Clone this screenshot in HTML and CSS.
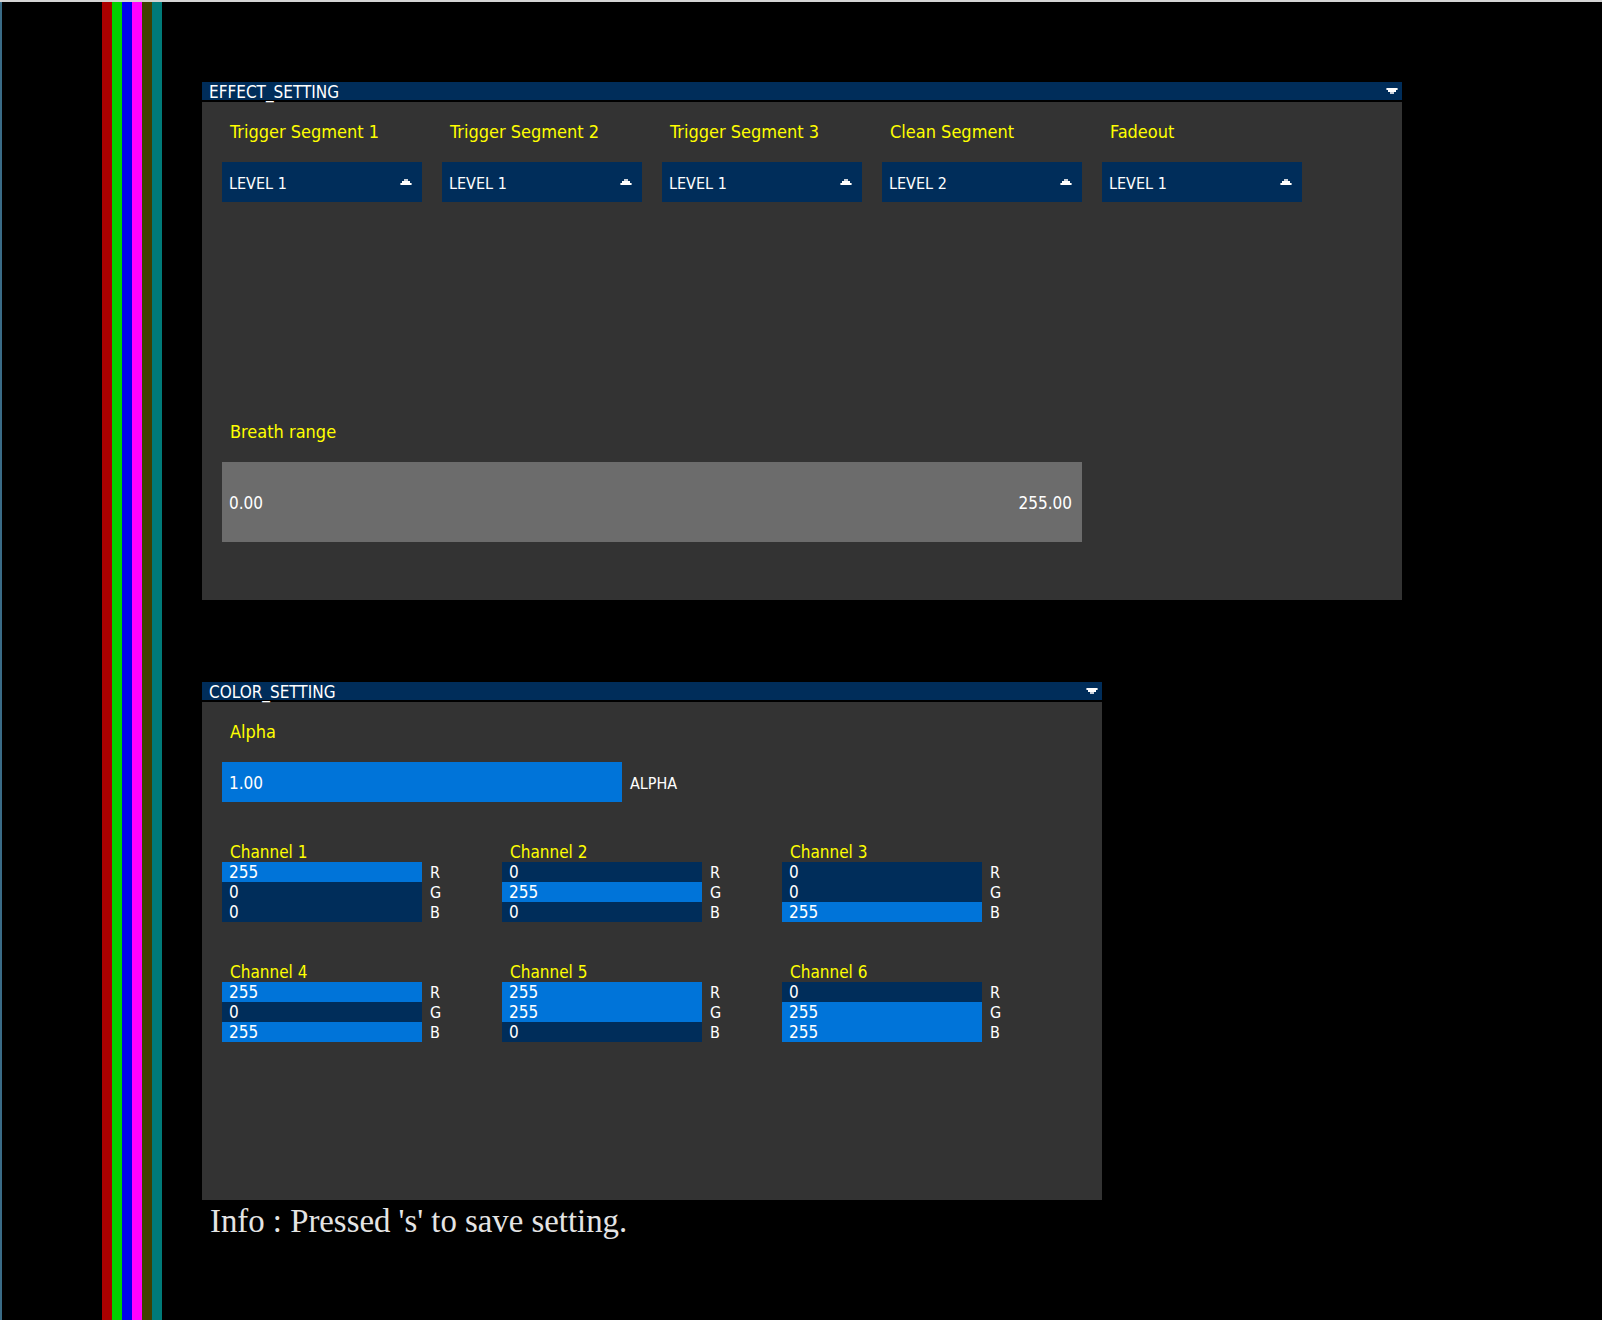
FILE: index.html
```html
<!DOCTYPE html>
<html>
<head>
<meta charset="utf-8">
<title>Settings</title>
<link rel="stylesheet" href="styles.css">
</head>
<body>
<div class="screen">
  <div class="edge"></div>
  <div class="gutter"></div>
  <div class="stripes">
    <div class="stripe s-red"></div>
    <div class="stripe s-green"></div>
    <div class="stripe s-blue"></div>
    <div class="stripe s-magenta"></div>
    <div class="stripe s-olive"></div>
    <div class="stripe s-teal"></div>
  </div>
  <div class="spacer"></div>
  <main class="content">
    <section class="group group-effect">
      <header class="group-head">
        <span>EFFECT_SETTING</span>
        <svg class="caret" width="12" height="6" viewBox="0 0 12 6" shape-rendering="crispEdges">
          <rect x="0" y="0" width="12" height="2" fill="#fff"/>
          <rect x="0" y="0" width="1" height="2" fill="#9aa7b8"/>
          <rect x="11" y="0" width="1" height="2" fill="#9aa7b8"/>
          <rect x="2" y="2" width="8" height="2" fill="#fff"/>
          <rect x="4" y="4" width="4" height="2" fill="#c9d0da"/>
        </svg>
      </header>
      <div class="group-body">
        <div class="seg-row">
          <div class="seg">
            <div class="label label-top">Trigger Segment 1</div>
            <div class="dropdown"><span>LEVEL 1</span>
              <svg class="caret" width="12" height="6" viewBox="0 0 12 6" shape-rendering="crispEdges"><rect x="4" y="0" width="4" height="2" fill="#c9d0da"/><rect x="2" y="2" width="8" height="2" fill="#fff"/><rect x="0" y="4" width="12" height="2" fill="#fff"/><rect x="0" y="4" width="1" height="2" fill="#9aa7b8"/><rect x="11" y="4" width="1" height="2" fill="#9aa7b8"/></svg>
            </div>
          </div>
          <div class="seg">
            <div class="label label-top">Trigger Segment 2</div>
            <div class="dropdown"><span>LEVEL 1</span>
              <svg class="caret" width="12" height="6" viewBox="0 0 12 6" shape-rendering="crispEdges"><rect x="4" y="0" width="4" height="2" fill="#c9d0da"/><rect x="2" y="2" width="8" height="2" fill="#fff"/><rect x="0" y="4" width="12" height="2" fill="#fff"/><rect x="0" y="4" width="1" height="2" fill="#9aa7b8"/><rect x="11" y="4" width="1" height="2" fill="#9aa7b8"/></svg>
            </div>
          </div>
          <div class="seg">
            <div class="label label-top">Trigger Segment 3</div>
            <div class="dropdown"><span>LEVEL 1</span>
              <svg class="caret" width="12" height="6" viewBox="0 0 12 6" shape-rendering="crispEdges"><rect x="4" y="0" width="4" height="2" fill="#c9d0da"/><rect x="2" y="2" width="8" height="2" fill="#fff"/><rect x="0" y="4" width="12" height="2" fill="#fff"/><rect x="0" y="4" width="1" height="2" fill="#9aa7b8"/><rect x="11" y="4" width="1" height="2" fill="#9aa7b8"/></svg>
            </div>
          </div>
          <div class="seg">
            <div class="label label-top">Clean Segment</div>
            <div class="dropdown"><span>LEVEL 2</span>
              <svg class="caret" width="12" height="6" viewBox="0 0 12 6" shape-rendering="crispEdges"><rect x="4" y="0" width="4" height="2" fill="#c9d0da"/><rect x="2" y="2" width="8" height="2" fill="#fff"/><rect x="0" y="4" width="12" height="2" fill="#fff"/><rect x="0" y="4" width="1" height="2" fill="#9aa7b8"/><rect x="11" y="4" width="1" height="2" fill="#9aa7b8"/></svg>
            </div>
          </div>
          <div class="seg">
            <div class="label label-top">Fadeout</div>
            <div class="dropdown"><span>LEVEL 1</span>
              <svg class="caret" width="12" height="6" viewBox="0 0 12 6" shape-rendering="crispEdges"><rect x="4" y="0" width="4" height="2" fill="#c9d0da"/><rect x="2" y="2" width="8" height="2" fill="#fff"/><rect x="0" y="4" width="12" height="2" fill="#fff"/><rect x="0" y="4" width="1" height="2" fill="#9aa7b8"/><rect x="11" y="4" width="1" height="2" fill="#9aa7b8"/></svg>
            </div>
          </div>
        </div>
        <div class="label breath-label">Breath range</div>
        <div class="range"><span>0.00</span><span>255.00</span></div>
      </div>
    </section>

    <section class="group group-color">
      <header class="group-head">
        <span>COLOR_SETTING</span>
        <svg class="caret" width="12" height="6" viewBox="0 0 12 6" shape-rendering="crispEdges">
          <rect x="0" y="0" width="12" height="2" fill="#fff"/>
          <rect x="0" y="0" width="1" height="2" fill="#9aa7b8"/>
          <rect x="11" y="0" width="1" height="2" fill="#9aa7b8"/>
          <rect x="2" y="2" width="8" height="2" fill="#fff"/>
          <rect x="4" y="4" width="4" height="2" fill="#c9d0da"/>
        </svg>
      </header>
      <div class="group-body">
        <div class="label label-top">Alpha</div>
        <div class="alpha-row">
          <div class="alpha-bar">1.00</div>
          <span class="side">ALPHA</span>
        </div>
        <div class="channels">
          <div class="channel">
            <div class="label ch-label">Channel 1</div>
            <div class="row"><div class="cell on">255</div><span class="side">R</span></div>
            <div class="row"><div class="cell">0</div><span class="side">G</span></div>
            <div class="row"><div class="cell">0</div><span class="side">B</span></div>
          </div>
          <div class="channel">
            <div class="label ch-label">Channel 2</div>
            <div class="row"><div class="cell">0</div><span class="side">R</span></div>
            <div class="row"><div class="cell on">255</div><span class="side">G</span></div>
            <div class="row"><div class="cell">0</div><span class="side">B</span></div>
          </div>
          <div class="channel">
            <div class="label ch-label">Channel 3</div>
            <div class="row"><div class="cell">0</div><span class="side">R</span></div>
            <div class="row"><div class="cell">0</div><span class="side">G</span></div>
            <div class="row"><div class="cell on">255</div><span class="side">B</span></div>
          </div>
          <div class="channel">
            <div class="label ch-label">Channel 4</div>
            <div class="row"><div class="cell on">255</div><span class="side">R</span></div>
            <div class="row"><div class="cell">0</div><span class="side">G</span></div>
            <div class="row"><div class="cell on">255</div><span class="side">B</span></div>
          </div>
          <div class="channel">
            <div class="label ch-label">Channel 5</div>
            <div class="row"><div class="cell on">255</div><span class="side">R</span></div>
            <div class="row"><div class="cell on">255</div><span class="side">G</span></div>
            <div class="row"><div class="cell">0</div><span class="side">B</span></div>
          </div>
          <div class="channel">
            <div class="label ch-label">Channel 6</div>
            <div class="row"><div class="cell">0</div><span class="side">R</span></div>
            <div class="row"><div class="cell on">255</div><span class="side">G</span></div>
            <div class="row"><div class="cell on">255</div><span class="side">B</span></div>
          </div>
        </div>
      </div>
    </section>

    <p class="info">Info : Pressed 's' to save setting.</p>
  </main>
</div>
</body>
</html>
```

FILE: styles.css
```css
html, body {
  margin: 0;
  padding: 0;
  background: #000;
}

body {
  width: 1602px;
  height: 1320px;
  overflow: hidden;
  font-family: "DejaVu Sans Condensed", "DejaVu Sans", sans-serif;
  font-stretch: condensed;
  color: #fff;
}

.screen {
  display: flex;
  height: 1320px;
  box-sizing: border-box;
  border-top: 2px solid #d4d4d4;
}

.edge {
  width: 2px;
  background: #3a6b86;
}

.gutter {
  width: 100px;
}

.stripes {
  display: flex;
}

.stripe {
  width: 10px;
}

.s-red { background: #aa0000; }
.s-green { background: #00d200; }
.s-blue { background: #0000ee; }
.s-magenta { background: #ff00ff; }
.s-olive { background: #403f00; }
.s-teal { background: #007a78; }

.spacer {
  width: 40px;
}

.content {
  padding-top: 80px;
}

.group-effect { width: 1200px; }
.group-color { width: 900px; margin-top: 82px; }

.group-head {
  height: 18px;
  background: #002d5a;
  display: flex;
  align-items: center;
  justify-content: space-between;
  padding: 0 4px 0 7px;
  font-size: 17px;
  line-height: 18px;
  color: #fff;
}

.group-head span {
  padding-top: 1px;
}

.caret {
  display: block;
}

.group-body {
  margin-top: 2px;
  height: 498px;
  background: #333333;
  padding: 0 20px;
  box-sizing: border-box;
}

.label {
  color: #ffff00;
  font-size: 18px;
  line-height: 20px;
  padding-left: 8px;
  white-space: nowrap;
}

.label-top {
  height: 60px;
  padding-top: 20px;
  box-sizing: border-box;
}

.seg-row {
  display: flex;
  gap: 20px;
}

.seg {
  width: 200px;
}

.dropdown {
  height: 40px;
  background: #002d5a;
  display: flex;
  align-items: center;
  justify-content: space-between;
  padding: 0 10px 0 7px;
  font-size: 16px;
}

.dropdown span {
  padding-top: 2px;
}

.breath-label {
  margin-top: 220px;
}

.range {
  margin-top: 20px;
  width: 860px;
  height: 80px;
  background: #6c6c6c;
  display: flex;
  align-items: center;
  justify-content: space-between;
  padding: 2px 10px 0 7px;
  box-sizing: border-box;
  font-size: 17px;
  line-height: 20px;
}

.alpha-row {
  display: flex;
  align-items: center;
}

.alpha-bar {
  width: 400px;
  height: 40px;
  background: #0074d9;
  padding: 2px 0 0 7px;
  box-sizing: border-box;
  display: flex;
  align-items: center;
  font-size: 17px;
}

.side {
  padding: 1px 0 0 8px;
  font-size: 16px;
  line-height: 20px;
}

.alpha-row .side {
  padding-top: 3px;
}

.channels {
  margin-top: 40px;
  display: grid;
  grid-template-columns: repeat(3, 280px);
  row-gap: 40px;
}

.ch-label {
  font-size: 17px;
  line-height: 20px;
}

.row {
  display: flex;
  height: 20px;
}

.cell {
  width: 200px;
  height: 20px;
  background: #002d5a;
  padding: 1px 0 0 7px;
  box-sizing: border-box;
  font-size: 17px;
  line-height: 19px;
}

.cell.on {
  background: #0074d9;
}

.info {
  margin: 5px 0 0;
  padding-left: 8px;
  font-family: "Liberation Serif", "Times New Roman", serif;
  font-size: 32.8px;
  line-height: 33px;
  color: #e4e4e4;
}
```
